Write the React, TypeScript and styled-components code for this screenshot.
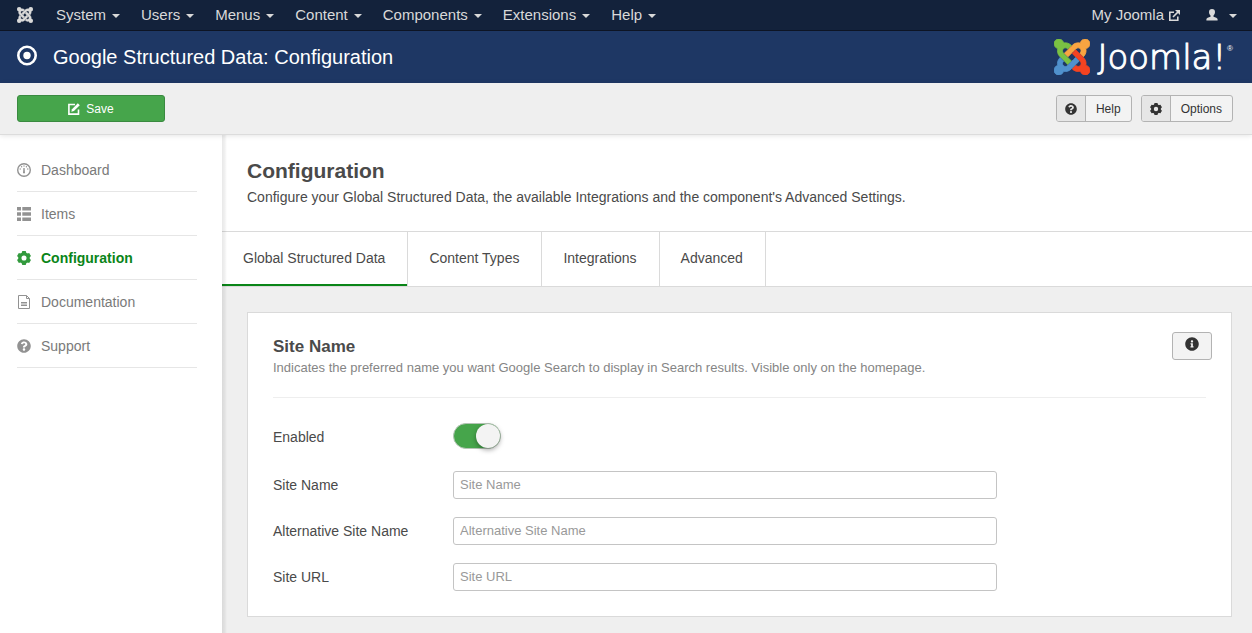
import React, { useState } from "react";
import styled, { createGlobalStyle } from "styled-components";
import { FaQuestionCircle, FaInfoCircle } from "react-icons/fa";

const GlobalStyle = createGlobalStyle`
  *, *::before, *::after { box-sizing: border-box; }
  html, body, #root { min-height: 100%; }
  body {
    margin: 0;
    background: #efefef;
    color: #4a4a4a;
    font-family: "Liberation Sans", Helvetica, Arial, sans-serif;
    font-size: 14px;
    line-height: 20px;
  }
  button, input { font: inherit; }
  h1, h2, h3, p, ul { margin: 0; padding: 0; }
  svg { display: block; flex: none; }
`;

const Page = styled.div`
  display: flex;
  flex-direction: column;
  min-height: 100vh;
`;

const TopBar = styled.nav`
  display: flex;
  align-items: center;
  height: 31px;
  padding: 0 15px 0 17px;
  background: #13223b;
  border-bottom: 1px solid #0d1424;
  color: #d9d9d9;
  font-size: 15px;
`;

const MenuList = styled.ul`
  display: flex;
  flex: 1;
  gap: 21px;
  margin-left: 23px;
  list-style: none;
`;

const MenuLink = styled.a<{ $gap?: number }>`
  display: flex;
  align-items: center;
  gap: ${(p) => p.$gap ?? 6}px;
  color: #d9d9d9;
  text-decoration: none;
`;

const Caret = styled.span`
  width: 8px;
  margin-top: 2px;
  border: 4px solid transparent;
  border-top-color: currentColor;
  border-bottom: 0;
`;

const SiteLinks = styled.div`
  display: flex;
  align-items: center;
  gap: 26px;
`;

const Header = styled.header`
  display: flex;
  align-items: center;
  justify-content: space-between;
  height: 52px;
  padding: 0 19px 0 17px;
  background: #1e3764;
  color: #fff;
`;

const Title = styled.h1`
  display: flex;
  align-items: center;
  gap: 15px;
  font-size: 20px;
  font-weight: 400;
  line-height: 24px;
  svg { margin-bottom: 4px; }
`;

const Brand = styled.div`
  display: flex;
  align-items: center;
`;

const Wordmark = styled.span`
  margin: 0 1px 0 7px;
  font-family: "DejaVu Sans", sans-serif;
  font-size: 34px;
  font-weight: 200;
  line-height: 36px;
  -webkit-text-stroke: 1px #fff;
`;

const Registered = styled.span`
  align-self: flex-start;
  font-size: 8px;
  line-height: 20px;
`;

const Toolbar = styled.div`
  display: flex;
  align-items: center;
  gap: 9px;
  height: 52px;
  padding: 0 19px 0 17px;
  background: #efefef;
  border-bottom: 1px solid #dcdcdc;
  box-shadow: 0 1px 5px rgba(0, 0, 0, 0.1);
  z-index: 1;
`;

const SaveButton = styled.button`
  display: flex;
  align-items: center;
  justify-content: center;
  gap: 6px;
  width: 148px;
  height: 27px;
  margin-right: auto;
  border: 1px solid #3a8a40;
  border-radius: 3px;
  background: #46a54b;
  color: #fff;
  font-size: 12px;
`;

const ToolButton = styled.button`
  display: flex;
  height: 27px;
  padding: 0;
  overflow: hidden;
  border: 1px solid #b3b3b3;
  border-radius: 3px;
  background: #f3f3f3;
  color: #333;
  font-size: 12px;
  line-height: 26px;
`;

const ToolIcon = styled.span`
  display: flex;
  align-items: center;
  justify-content: center;
  width: 29px;
  height: 25px;
  border-right: 1px solid #b3b3b3;
  background: #e6e6e6;
`;

const ToolLabel = styled.span`
  padding: 0 10px;
`;

const Body = styled.div`
  display: flex;
  flex: 1;
`;

const Sidebar = styled.aside`
  flex: none;
  width: 222px;
  padding: 13px 25px 0 17px;
  background: #fff;
`;

const SideLink = styled.a<{ $active?: boolean }>`
  display: flex;
  align-items: center;
  gap: 10px;
  height: 44px;
  border-bottom: 1px solid #e6e6e6;
  color: ${(p) => (p.$active ? "#0a8518" : "#7a7a7a")};
  font-weight: ${(p) => (p.$active ? 700 : 400)};
  text-decoration: none;
  svg { color: ${(p) => (p.$active ? "#329a3d" : "#929292")}; }
`;

const Main = styled.main`
  flex: 1;
  min-width: 0;
  position: relative;
  &::before {
    content: "";
    position: absolute;
    inset: 0 auto 0 0;
    width: 5px;
    background: linear-gradient(90deg, rgba(0, 0, 0, 0.09), rgba(0, 0, 0, 0.05) 60%, transparent);
    pointer-events: none;
  }
`;

const Intro = styled.section`
  height: 97px;
  padding: 24px 25px 0;
  background: #fff;
  border-bottom: 1px solid #dadada;
`;

const PageHeading = styled.h2`
  font-size: 21px;
  line-height: 24px;
  margin-bottom: 4px;
`;

const Tabs = styled.div`
  display: flex;
  height: 55px;
  background: #fff;
  border-bottom: 1px solid #dadada;
`;

const Tab = styled.button<{ $active?: boolean }>`
  padding: 0 22px 2px 21px;
  border: 0;
  border-right: 1px solid #dadada;
  background: none;
  box-shadow: ${(p) => (p.$active ? "inset 0 -2px #0a8518" : "none")};
  color: #4a4a4a;
`;

const Panel = styled.section`
  margin: 25px 20px 16px 25px;
  padding: 19px 25px 25px;
  background: #fff;
  border: 1px solid #dadada;
`;

const PanelHead = styled.div`
  display: flex;
  justify-content: space-between;
  height: 66px;
  border-bottom: 1px solid #eee;
`;

const PanelTitle = styled.h3`
  margin-top: 5px;
  font-size: 17px;
  line-height: 20px;
`;

const PanelNote = styled.p`
  margin-top: 2px;
  color: #858585;
  font-size: 13px;
  line-height: 18px;
`;

const InfoButton = styled.button`
  display: flex;
  justify-content: center;
  width: 40px;
  height: 28px;
  margin-right: -6px;
  padding: 4px 0 0;
  border: 1px solid #b3b3b3;
  border-radius: 3px;
  background: #f3f3f3;
  color: #333;
`;

const Fields = styled.form`
  display: flex;
  flex-direction: column;
  gap: 18px;
  padding-top: 23px;
`;

const Field = styled.div<{ $tall?: boolean }>`
  display: grid;
  grid-template-columns: 180px minmax(0, 544px);
  align-items: center;
  min-height: ${(p) => (p.$tall ? 32 : 28)}px;
`;

const TextBox = styled.input`
  width: 100%;
  height: 28px;
  padding: 0 6px 2px;
  border: 1px solid #c4c4c4;
  border-radius: 3px;
  background: #fff;
  color: #555;
  font-size: 13px;
  &::placeholder { color: #999; opacity: 1; }
`;

const Switch = styled.input`
  appearance: none;
  display: block;
  width: 48px;
  height: 26px;
  margin: 0 0 2px;
  border: 1px solid #b5c4b6;
  border-radius: 13px;
  background: #ccc;
  &::before {
    content: "";
    display: block;
    width: 24px;
    height: 24px;
    border-radius: 50%;
    background: #f3f3f3;
    box-shadow: 0 2px 5px rgba(0, 0, 0, 0.35);
  }
  &:checked { background: #46a54b; }
  &:checked::before { margin-left: 22px; }
`;

const markParts = [
  { color: "#7ac143", d: "M.6 92.1C.6 58.8 27.4 32 60.4 32c30 0 54.5 21.9 59.2 50.2 32.6-7.6 67.1.6 96.5 30l-44.3 44.3c-20.5-20.5-42.6-16.3-55.4-3.5-14.3 14.3-14.3 37.9 0 52.2l99.5 99.5-44 44.3c-87.7-87.2-49.7-49.7-99.8-99.7-26.8-26.5-35-64.8-24.8-98.9C20.4 144.6.6 120.7.6 92.1z" },
  { color: "#f9a541", d: "M130.1 208.5l44.3 44.3c10-10 89.7-89.7 99.7-99.8 14.3-14.3 37.6-14.3 51.9 0 12.8 12.8 17 35-3.5 55.4l44 44.3c31.2-31.2 38.5-67.6 28.9-101.2 29.2-4.1 51.9-29.2 51.9-59.5 0-33.2-26.8-60.1-59.8-60.1-30.3 0-55.4 22.5-59.5 51.6-33.8-9.9-71.7-1.5-98.3 25.1-18.3 19.1-71.1 71.5-99.6 99.9z" },
  { color: "#f44321", d: "M396.4 360.7c8.2-32.7-.9-68.5-26.3-93.9-11.8-12.2 5 4.7-99.5-99.7l-44.3 44.3 99.7 99.7c14.3 14.3 14.3 37.6 0 51.9-12.8 12.8-35 17-55.4-3.5l-44 44.3c27.6 30.2 68 38.8 102.7 28 5.5 27.4 29.7 48.1 58.9 48.1 33 0 59.8-26.8 59.8-60.1 0-30.2-22.5-55-51.6-59.1z" },
  { color: "#5091cd", d: "M312.1 307.6l-44-44.3c-87 86.4-50.4 50.4-99.7 99.8-14.3 14.3-37.6 14.3-51.9 0-13.1-13.4-16.9-35.3 3.2-55.4l-44-44.3c-30.2 30.2-38 65.2-29.5 98.3-26.7 6-46.2 29.9-46.2 58.2C0 453.2 26.8 480 59.8 480c28.6 0 52.5-19.8 58.6-46.7 32.7 8.2 68.5-.6 94.2-26 32.1-32 12.2-12.4 99.5-99.7z" },
];

const Mark = ({ size, color }: { size: number; color?: string }) => (
  <svg width={size} height={size} viewBox="0 32 448 448" aria-hidden="true">
    {markParts.map((p) => (
      <path key={p.color} d={p.d} fill={color ?? p.color} stroke={color ?? p.color} strokeWidth="10" />
    ))}
  </svg>
);

const TargetIcon = () => (
  <svg width="21" height="21" viewBox="0 0 21 21" aria-hidden="true">
    <circle cx="10" cy="10.5" r="8.7" fill="none" stroke="#fff" strokeWidth="2.6" />
    <circle cx="10" cy="10.5" r="3.7" fill="#fff" />
  </svg>
);

const GearIcon = ({ size }: { size: number }) => (
  <svg width={size} height={size} viewBox="0 0 16 16" fill="currentColor" aria-hidden="true">
    <circle cx="8" cy="8" r="4.7" fill="none" stroke="currentColor" strokeWidth="3.6" />
    {[0, 60, 120, 180, 240, 300].map((a) => (
      <path key={a} d="M5.2 3 6 0h4l.8 3z" transform={`rotate(${a} 8 8)`} />
    ))}
  </svg>
);

const EditIcon = () => (
  <svg width="12" height="12" viewBox="0 0 12 12" aria-hidden="true">
    <path d="M7 1.5H.9v9.6h9.6V6.5" fill="none" stroke="#fff" strokeWidth="1.6" />
    <path d="M3.3 8.8 4 6.2 9.8.3l2 2L5.9 8z" fill="#fff" />
  </svg>
);

const ExternalIcon = () => (
  <svg width="11" height="11" viewBox="0 0 11 11" fill="none" stroke="currentColor" strokeWidth="1.6" aria-hidden="true">
    <path d="M5 2.2H.8v8h8V6.5M4 7l5.6-5.6" />
    <path d="M6 0H11v5z" fill="currentColor" stroke="none" />
  </svg>
);

const UserIcon = () => (
  <svg width="12" height="12" viewBox="0 0 12 12" fill="currentColor" aria-hidden="true">
    <path d="M6 0C4 0 3 1.3 3 3c0 1.4.6 2.8 1.5 3.5v1.3C2.500 8.400.4 9.300.4 10.300V11.500h11.200v-1.200c0-1-2.100-1.900-4.100-2.500V6.500C8.400 5.800 9 4.400 9 3 9 1.300 8 0 6 0z" />
  </svg>
);

const DashboardIcon = () => (
  <svg width="14" height="14" viewBox="0 0 14 14" fill="currentColor" aria-hidden="true">
    <circle cx="7" cy="7" r="6.3" fill="none" stroke="currentColor" strokeWidth="1.4" />
    <path d="M6.4 5h1.2l.4 5.200H6z" />
    <circle cx="3.2" cy="6" r=".7" /><circle cx="4.6" cy="3.8" r=".7" /><circle cx="7" cy="3" r=".7" />
    <circle cx="9.4" cy="3.8" r=".7" /><circle cx="10.8" cy="6" r=".7" />
  </svg>
);

const ListIcon = () => (
  <svg width="14" height="14" viewBox="0 0 14 14" fill="currentColor" aria-hidden="true">
    {[0, 5.2, 10.4].map((y) => (
      <path key={y} d={`M0 ${y}h4v3.6H0zM5.3 ${y}H14v3.6H5.3z`} />
    ))}
  </svg>
);

const FileIcon = () => (
  <svg width="14" height="14" viewBox="0 0 14 14" fill="none" stroke="currentColor" aria-hidden="true">
    <path d="M1.500.5h8l3 3v10h-11zM9.500.5v3h3M4 7.500h6M4 9h6M4 10.500h6" />
  </svg>
);

const menus = ["System", "Users", "Menus", "Content", "Components", "Extensions", "Help"];
const tabs = ["Global Structured Data", "Content Types", "Integrations", "Advanced"];
const sideItems = [
  { label: "Dashboard", icon: <DashboardIcon /> },
  { label: "Items", icon: <ListIcon /> },
  { label: "Configuration", icon: <GearIcon size={14} />, active: true },
  { label: "Documentation", icon: <FileIcon /> },
  { label: "Support", icon: <FaQuestionCircle size={14} /> },
];
const textFields = [
  { id: "site-name", label: "Site Name" },
  { id: "alt-name", label: "Alternative Site Name" },
  { id: "site-url", label: "Site URL" },
];

export default function App() {
  const [tab, setTab] = useState(0);
  const [enabled, setEnabled] = useState(true);
  return (
    <Page>
      <GlobalStyle />
      <TopBar>
        <Mark size={16} color="#d9d9d9" />
        <MenuList>
          {menus.map((m) => (
            <li key={m}><MenuLink href="#">{m}<Caret /></MenuLink></li>
          ))}
        </MenuList>
        <SiteLinks>
          <MenuLink href="#" $gap={5}>My Joomla<ExternalIcon /></MenuLink>
          <MenuLink href="#" $gap={11} aria-label="User menu"><UserIcon /><Caret /></MenuLink>
        </SiteLinks>
      </TopBar>
      <Header>
        <Title><TargetIcon />Google Structured Data: Configuration</Title>
        <Brand><Mark size={36} /><Wordmark>Joomla!</Wordmark><Registered>®</Registered></Brand>
      </Header>
      <Toolbar>
        <SaveButton type="button"><EditIcon />Save</SaveButton>
        <ToolButton type="button"><ToolIcon><FaQuestionCircle size={12} /></ToolIcon><ToolLabel>Help</ToolLabel></ToolButton>
        <ToolButton type="button"><ToolIcon><GearIcon size={12} /></ToolIcon><ToolLabel>Options</ToolLabel></ToolButton>
      </Toolbar>
      <Body>
        <Sidebar>
          {sideItems.map((s) => (
            <SideLink key={s.label} href="#" $active={s.active}>{s.icon}{s.label}</SideLink>
          ))}
        </Sidebar>
        <Main>
          <Intro>
            <PageHeading>Configuration</PageHeading>
            <p>Configure your Global Structured Data, the available Integrations and the component's Advanced Settings.</p>
          </Intro>
          <Tabs role="tablist">
            {tabs.map((t, i) => (
              <Tab key={t} type="button" role="tab" aria-selected={i === tab} $active={i === tab} onClick={() => setTab(i)}>{t}</Tab>
            ))}
          </Tabs>
          <Panel>
            <PanelHead>
              <div>
                <PanelTitle>Site Name</PanelTitle>
                <PanelNote>Indicates the preferred name you want Google Search to display in Search results. Visible only on the homepage.</PanelNote>
              </div>
              <InfoButton type="button" aria-label="Information"><FaInfoCircle size={14} /></InfoButton>
            </PanelHead>
            <Fields>
              <Field $tall>
                <label htmlFor="enabled">Enabled</label>
                <Switch id="enabled" type="checkbox" role="switch" checked={enabled} onChange={(e) => setEnabled(e.target.checked)} />
              </Field>
              {textFields.map((f) => (
                <Field key={f.id}>
                  <label htmlFor={f.id}>{f.label}</label>
                  <TextBox id={f.id} type="text" placeholder={f.label} />
                </Field>
              ))}
            </Fields>
          </Panel>
        </Main>
      </Body>
    </Page>
  );
}
